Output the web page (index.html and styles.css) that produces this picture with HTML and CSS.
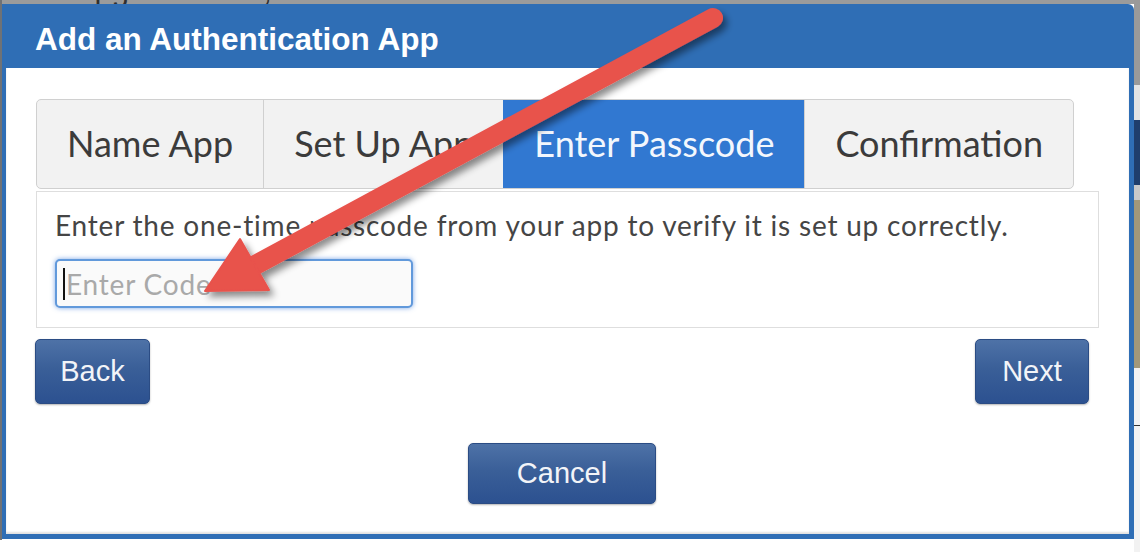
FILE: index.html
```html
<!DOCTYPE html>
<html lang="en">
<head>
<meta charset="utf-8">
<title>Add an Authentication App</title>
<link rel="stylesheet" href="styles.css">
</head>
<body>
<div class="page">
  <div class="edge edge-left">
    <div class="seg seg-grey"></div>
    <div class="seg seg-white"></div>
  </div>
  <div class="main">
    <div class="top-strip"><div class="top-strip-text">Upgraded BM, ED Account</div></div>
    <div class="modal">
      <div class="modal-header">
        <h1 class="modal-title">Add an Authentication App</h1>
      </div>
      <div class="modal-body">
        <div class="tabs">
          <div class="tab">Name App</div>
          <div class="tab">Set Up App</div>
          <div class="tab active">Enter Passcode</div>
          <div class="tab">Confirmation</div>
        </div>
        <div class="panel">
          <p class="panel-text">Enter the one-time passcode from your app to verify it is set up correctly.</p>
          <div class="code-input"><span class="caret"></span><span class="placeholder">Enter Code</span></div>
        </div>
        <div class="actions">
          <button class="btn btn-back">Back</button>
          <button class="btn btn-next">Next</button>
        </div>
        <div class="cancel-row">
          <button class="btn btn-cancel">Cancel</button>
        </div>
      </div>
    </div>
  </div>
  <div class="edge edge-right">
    <div class="seg r1"></div>
    <div class="seg r2"></div>
    <div class="seg r3"></div>
    <div class="seg r4"></div>
    <div class="seg r5"></div>
    <div class="seg r6"></div>
    <div class="seg r7"></div>
    <div class="seg r8"></div>
  </div>
</div>
<svg class="arrow" width="1140" height="552" viewBox="0 0 1140 552" xmlns="http://www.w3.org/2000/svg">
  <defs>
    <filter id="shadow" x="-20%" y="-20%" width="140%" height="140%">
      <feDropShadow dx="4" dy="5" stdDeviation="3.5" flood-color="#000" flood-opacity="0.45"/>
    </filter>
  </defs>
  <g filter="url(#shadow)" fill="#e8524c" stroke="#e8524c">
    <line x1="713" y1="18" x2="246" y2="270" stroke-width="20" stroke-linecap="round"/>
    <polygon points="205,291 240,239 269,290" stroke-width="2" stroke-linejoin="round"/>
  </g>
</svg>
</body>
</html>
```
FILE: styles.css
```css
* { box-sizing: border-box; }
html, body { margin: 0; padding: 0; }
body {
  width: 1140px;
  height: 552px;
  overflow: hidden;
  position: relative;
  background: #ffffff;
  font-family: Lato, "Liberation Sans", Arial, sans-serif;
}
.page { display: flex; height: 552px; }
.edge { display: flex; flex-direction: column; }
.edge-left { width: 2px; }
.edge-right { width: 6px; }
.seg-grey { height: 540px; background: #6f7276; }
.seg-white { flex: 1; background: #ffffff; }
.r1 { height: 85px; background: #9a9a9a; }
.r2 { height: 35px; background: #e4e4e4; }
.r3 { height: 65px; background: #1f3e6c; }
.r4 { height: 15px; background: #c9c9c9; }
.r5 { height: 168px; background: #a2987a; }
.r6 { height: 57px; background: #f2f2f2; }
.r7 { height: 1px; background: #333333; }
.r8 { flex: 1; background: #f2f2f2; }

.main { width: 1132px; display: flex; flex-direction: column; }
.top-strip { height: 4px; background: #9b9b9b; overflow: hidden; }
.top-strip-text {
  margin: -25px 0 0 70px;
  font: 31px/30px "Liberation Sans", Arial, sans-serif;
  color: #2e2e2e;
  white-space: nowrap;
}

.modal {
  height: 535px;
  background: #2f6eb5;
  border-top-right-radius: 6px;
  padding: 0 5px 5px 4px;
  display: flex;
  flex-direction: column;
}
.modal-header { height: 64px; padding: 5px 0 0 29px; }
.modal-title {
  margin: 0;
  font: bold 31.5px/60px "Liberation Sans", Arial, sans-serif;
  color: #ffffff;
}
.modal-body {
  flex: 1;
  background: #ffffff;
  padding: 31px 30px 30px;
  display: flex;
  flex-direction: column;
  box-shadow: inset 0 -2px 2px rgba(0, 0, 0, 0.12);
}

.tabs {
  align-self: flex-start;
  display: flex;
  height: 90px;
  border: 1px solid #d0d0d0;
  border-radius: 5px;
  overflow: hidden;
  background: #f2f2f2;
}
.tab {
  display: flex;
  align-items: center;
  padding: 0 30px 2px;
  font-size: 36px;
  color: #3b3b3b;
  border-left: 1px solid #d0d0d0;
}
.tab:first-child { border-left: 0; }
.tab.active { background: #3178d1; color: #f3f7fd; border-left-color: #3178d1; }

.panel {
  margin-top: 2px;
  height: 137px;
  border: 1px solid #dedede;
  padding: 16px 18px;
}
.panel-text {
  margin: 0;
  font-size: 28px;
  line-height: 34px;
  letter-spacing: 0.8px;
  color: #454545;
}
.code-input {
  margin-top: 17px;
  width: 358px;
  height: 49px;
  border: 2px solid #6199db;
  border-radius: 5px;
  background: #fafafa;
  box-shadow: 0 0 5px rgba(70, 130, 220, 0.7);
  display: flex;
  align-items: center;
  padding-left: 6px;
  font-size: 28px;
  letter-spacing: 0.8px;
  color: #a9a9a9;
}
.caret { width: 2px; height: 32px; background: #111111; margin-right: 1px; }

.actions {
  margin-top: 11px;
  display: flex;
  justify-content: space-between;
  padding-right: 10px;
}
.btn {
  height: 65px;
  padding: 0;
  border: 1px solid #2b4c84;
  border-radius: 5px;
  background: linear-gradient(#4e72a7, #3a5f98 45%, #2c5190);
  color: #f2f4f8;
  font: 29px "Liberation Sans", Arial, sans-serif;
  box-shadow: 0 1px 2px rgba(0, 0, 0, 0.3);
}
.btn-back { width: 115px; margin-left: -1px; }
.btn-next { width: 114px; }
.cancel-row {
  margin-top: 39px;
  display: flex;
  justify-content: center;
  padding-right: 11px;
}
.btn-cancel { width: 188px; height: 61px; }

.arrow { position: absolute; left: 0; top: 0; pointer-events: none; }
```
